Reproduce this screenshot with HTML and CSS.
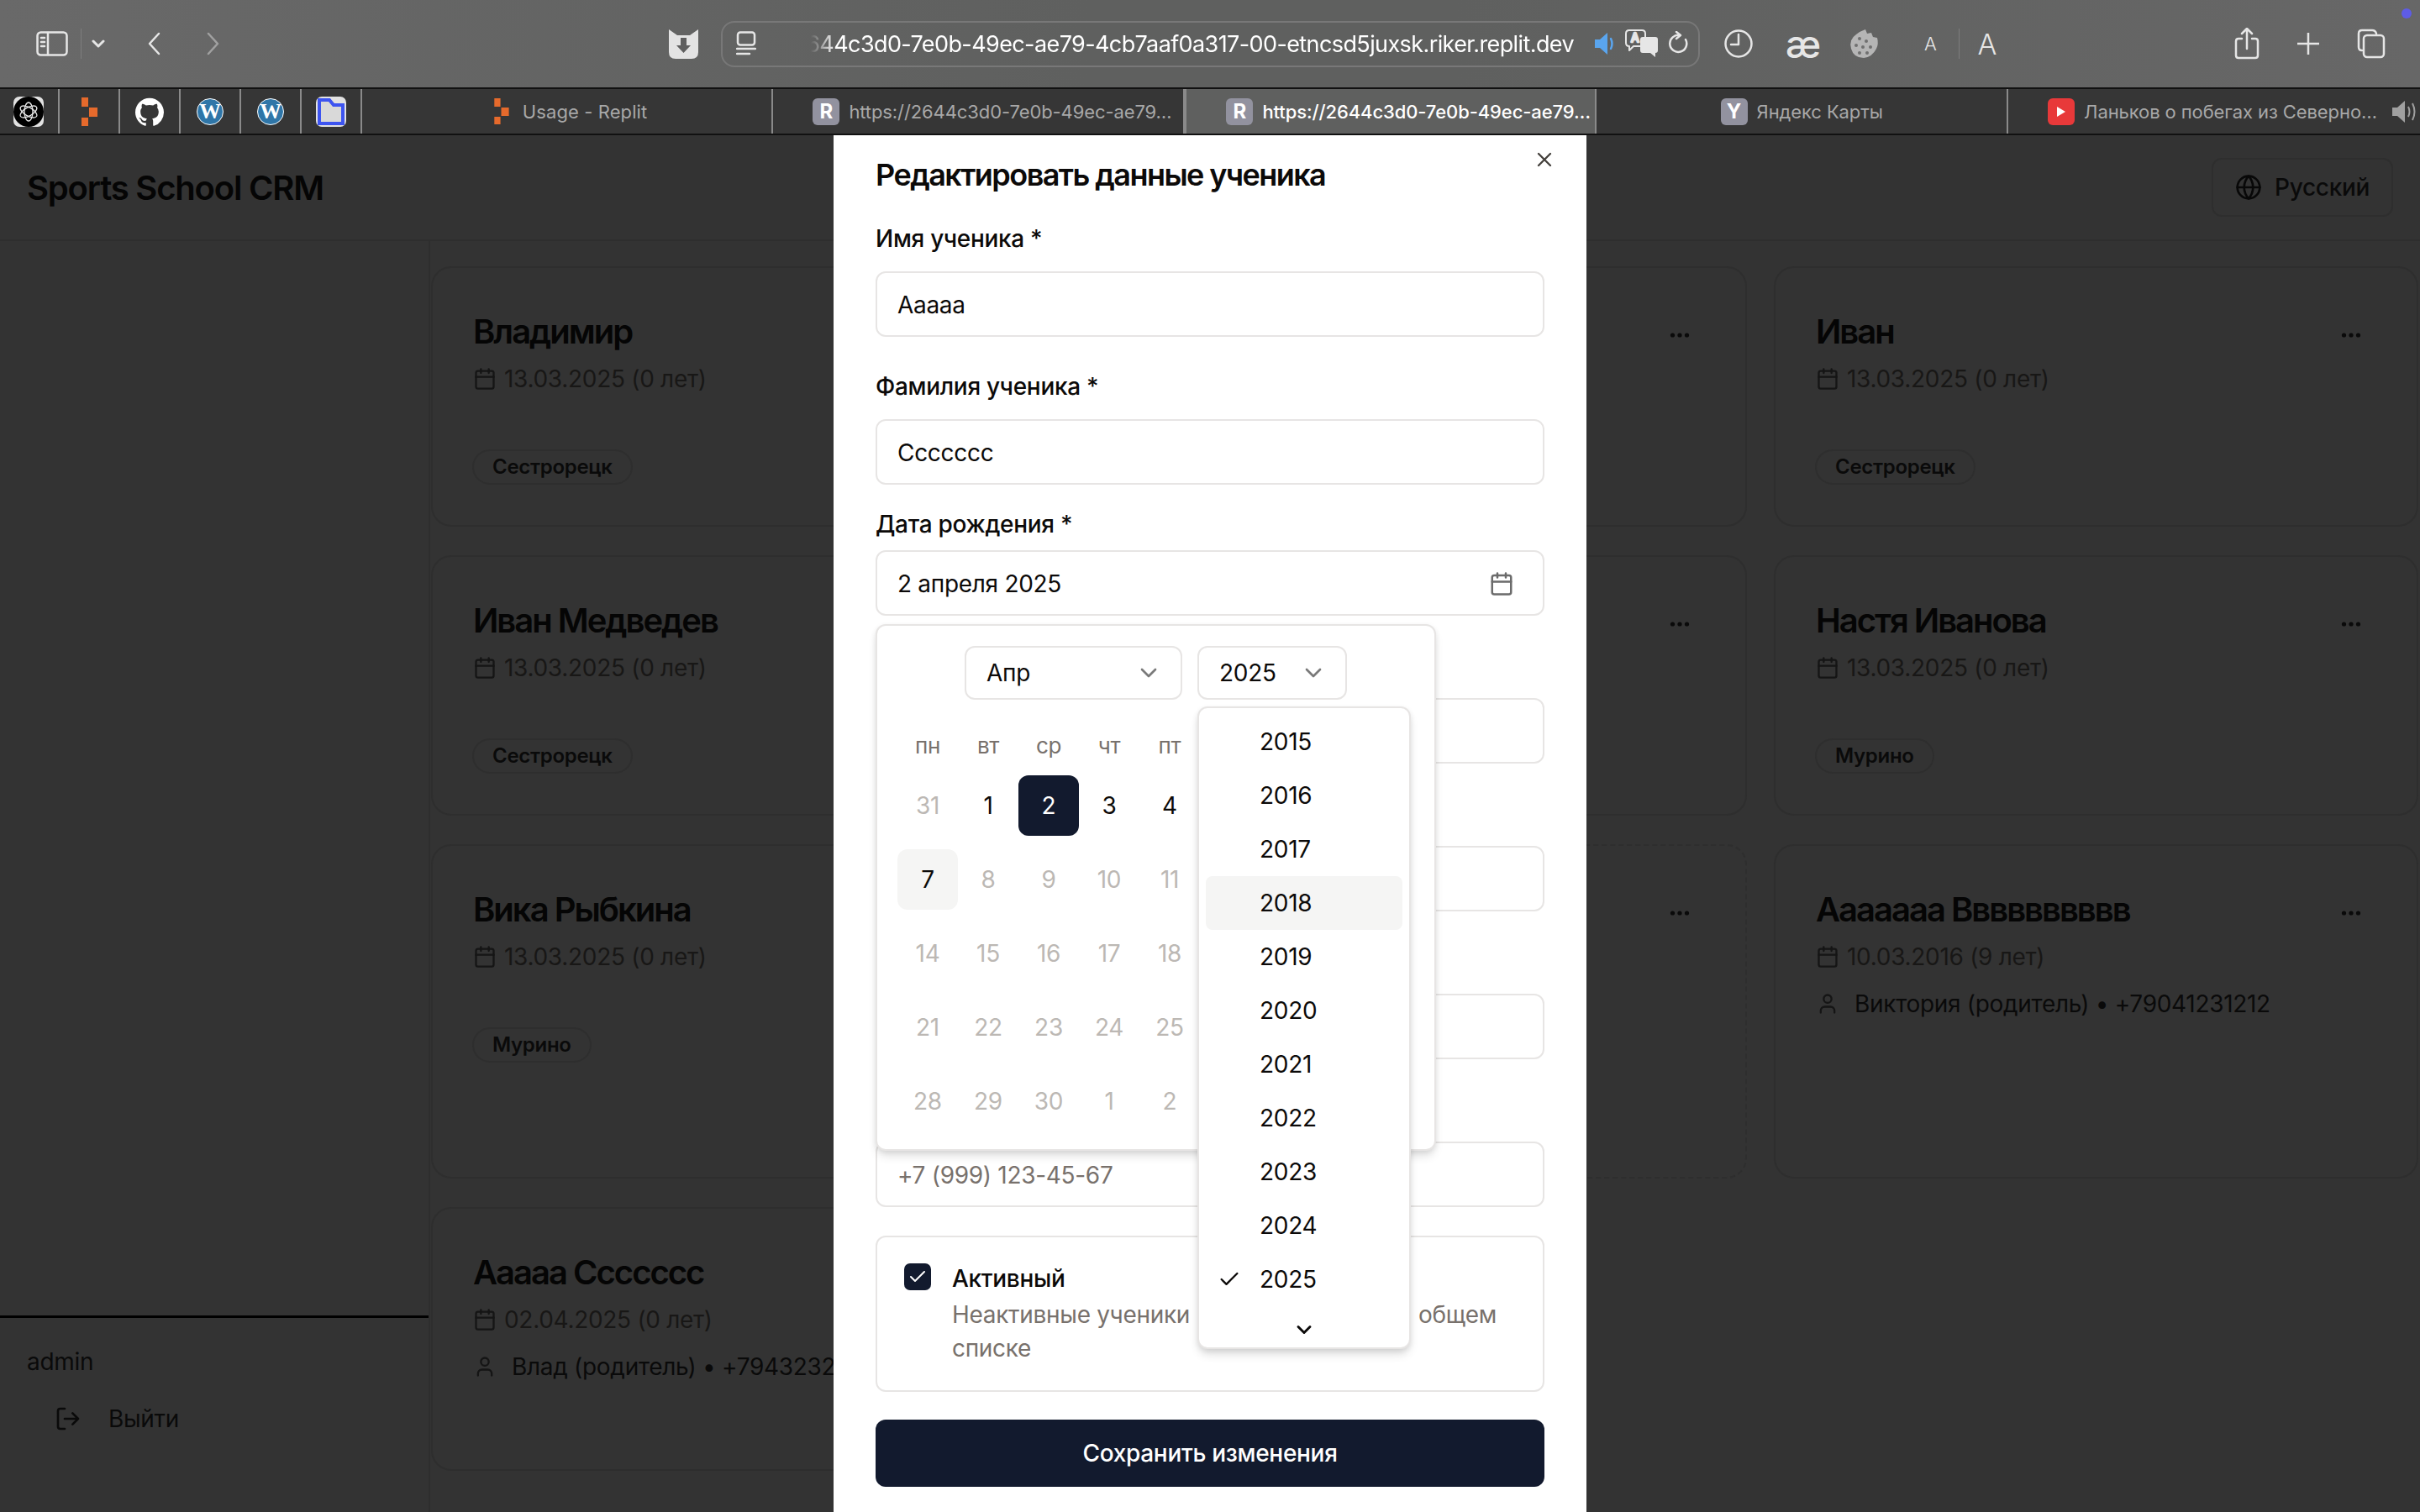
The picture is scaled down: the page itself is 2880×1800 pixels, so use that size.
FILE: index.html
```html
<!DOCTYPE html>
<html lang="ru">
<head>
    <meta charset="UTF-8">
    <title>Sports School CRM</title>
    <link rel="stylesheet" href="styles.css">
</head>
<body>

    <svg class="defs" width="0" height="0">
        <symbol id="i-cal" viewBox="0 0 24 24"><rect x="3" y="4" width="18" height="18" rx="2"/><path d="M16 2v4M8 2v4M3 10h18"/></symbol>
        <symbol id="i-user" viewBox="0 0 24 24"><path d="M19 21v-2a4 4 0 0 0-4-4H9a4 4 0 0 0-4 4v2"/><circle cx="12" cy="7" r="4"/></symbol>
        <symbol id="i-chev" viewBox="0 0 24 24"><path d="M6 9l6 6 6-6"/></symbol>
        <symbol id="i-dots" viewBox="0 0 24 8"><circle cx="3.5" cy="4" r="2.6"/><circle cx="12" cy="4" r="2.6"/><circle cx="20.5" cy="4" r="2.6"/></symbol>
    </svg>

    <!-- browser toolbar -->
    <div class="toolbar">
        <svg class="tb-sidebar" width="38" height="30" viewBox="0 0 38 30"><rect x="1.5" y="1.5" width="35" height="27" rx="4"/><path d="M14 2v26M6 8h4M6 13h4M6 18h4"/></svg>
        <span class="tb-sep"></span>
        <svg class="tb-menu" width="16" height="10" viewBox="0 0 16 10"><path d="M2 2l6 6 6-6"/></svg>
        <svg class="tb-back" width="16" height="28" viewBox="0 0 16 28"><path d="M14 2L3 14l11 12"/></svg>
        <svg class="tb-fwd" width="16" height="28" viewBox="0 0 16 28"><path d="M2 2l11 12L2 26"/></svg>
        <svg class="tb-shield" width="35" height="35" viewBox="0 0 35 35"><path class="shield-body" d="M0 0l10 7h15l10-7v27q0 8-8 8H8q-8 0-8-8z"/><path class="shield-arrow" d="M14 10h7v9h5l-8.500 9L9 19h5z"/></svg>

        <div class="urlbar">
            <svg class="url-reader" width="24" height="30" viewBox="0 0 24 30"><rect x="2" y="1.500" width="20" height="15" rx="3"/><path d="M1 21h22M1 27h15"/></svg>
            <div class="url-text"><span>2644c3d0-7e0b-49ec-ae79-4cb7aaf0a317-00-etncsd5juxsk.riker.replit.dev</span></div>
            <svg class="url-sound" width="26" height="28" viewBox="0 0 26 28"><path class="sound-fill" d="M1 9h6l9-8v26l-9-8H1z"/><path class="sound-wave" d="M20 8q3 6 0 12"/></svg>
            <svg class="url-translate" width="40" height="34" viewBox="0 0 40 34">
                <path class="tr-back" d="M5 1h15q4 0 4 4v11q0 4-4 4H10l-5 5v-5q-4 0-4-4V5q0-4 4-4z"/>
                <text class="tr-a" x="7" y="15">A</text>
                <path class="tr-front" d="M21 9h15q3 0 3 3v13q0 3-3 3v5l-6-5h-9q-3 0-3-3V12q0-3 3-3z"/>
                <text class="tr-x" x="26" y="24">x</text>
            </svg>
            <svg class="url-reload" width="24" height="30" viewBox="0 0 24 30"><path d="M14 5A10 10 0 1 0 21 10"/><path d="M10 1l5 4-5 4"/></svg>
        </div>

        <svg class="tb-clock" width="34" height="34" viewBox="0 0 34 34"><circle cx="17" cy="17" r="15.500"/><path d="M17 6v12H8"/></svg>
        <span class="tb-ae">æ</span>
        <svg class="tb-cookie" width="36" height="36" viewBox="0 0 36 36">
            <path class="cookie-body" d="M20 1l2 5 5-1 2 5 5 1q2 7-1 13-5 10-15 11Q6 35 3 24 0 13 9 7q5-4 11-6z"/>
            <circle cx="13" cy="12" r="2"/><circle cx="21" cy="15" r="2"/><circle cx="9" cy="20" r="2"/><circle cx="17" cy="22" r="2"/><circle cx="26" cy="22" r="2"/><circle cx="13" cy="29" r="2"/><circle cx="22" cy="29" r="2"/>
        </svg>
        <span class="tb-a-small">A</span>
        <span class="tb-sep tb-sep-a"></span>
        <span class="tb-a-big">A</span>
        <svg class="tb-share" width="30" height="38" viewBox="0 0 30 38"><path d="M9 13H5q-3 0-3 3v17q0 3 3 3h20q3 0 3-3V16q0-3-3-3h-4M15 25V2M9 7l6-6 6 6"/></svg>
        <svg class="tb-plus" width="26" height="26" viewBox="0 0 26 26"><path d="M13 0v26M0 13h26"/></svg>
        <svg class="tb-tabs" width="34" height="36" viewBox="0 0 34 36"><path d="M6 26q-4 0-4-4V6q0-4 4-4h12q4 0 5 4"/><rect x="8" y="8" width="24" height="26" rx="4"/></svg>
        <span class="tb-dot"></span>
    </div>

    <!-- tab strip -->
    <div class="tabstrip">
        <div class="pin">
            <span class="pin-tile pin-tile-gpt">
                <svg width="36" height="36" viewBox="0 0 36 36">
                    <circle class="gpt-disc" cx="18" cy="18" r="18"/>
                    <g class="gpt-knot"><ellipse cx="18" cy="18" rx="5" ry="11"/><ellipse cx="18" cy="18" rx="5" ry="11" transform="rotate(60 18 18)"/><ellipse cx="18" cy="18" rx="5" ry="11" transform="rotate(120 18 18)"/></g>
                </svg>
            </span>
        </div>
        <div class="pin">
            <svg class="replit" width="20" height="34" viewBox="0 0 20 34"><path d="M1 0h8v11H1zM10 12h10v11H10zM1 24h8v10H1z"/></svg>
        </div>
        <div class="pin">
            <svg class="github" width="34" height="34" viewBox="0 0 24 24"><path d="M12 .5C5.370.5 0 5.870 0 12.500c0 5.300 3.440 9.800 8.200 11.390.6.110.82-.26.82-.58v-2.030c-3.340.73-4.040-1.610-4.040-1.610-.55-1.390-1.340-1.760-1.340-1.760-1.090-.75.08-.73.08-.73 1.210.08 1.840 1.240 1.840 1.240 1.070 1.840 2.810 1.310 3.500 1 .1-.78.42-1.310.76-1.610-2.670-.3-5.470-1.340-5.470-5.930 0-1.310.47-2.380 1.240-3.220-.14-.3-.54-1.520.1-3.180 0 0 1-.32 3.300 1.230a11.500 11.500 0 0 1 6 0c2.280-1.550 3.290-1.230 3.290-1.230.64 1.660.24 2.880.12 3.180a4.650 4.650 0 0 1 1.230 3.220c0 4.610-2.800 5.630-5.480 5.920.42.36.81 1.100.81 2.220v3.290c0 .32.22.7.82.58A12 12 0 0 0 24 12.500C24 5.870 18.630.5 12 .5z"/></svg>
        </div>
        <div class="pin"><span class="wp">W</span></div>
        <div class="pin"><span class="wp">W</span></div>
        <div class="pin">
            <span class="pin-tile pin-tile-folder">
                <svg width="36" height="36" viewBox="0 0 36 36"><path d="M4 32V4h12l5 6h11v22z"/></svg>
            </span>
        </div>
        <div class="tab tab-usage">
            <svg class="replit" width="19" height="31" viewBox="0 0 20 34"><path d="M1 0h8v11H1zM10 12h10v11H10zM1 24h8v10H1z"/></svg>
            <span class="tab-label">Usage - Replit</span>
        </div>
        <div class="tab tab-url">
            <span class="fav">R</span>
            <span class="tab-label">https://2644c3d0-7e0b-49ec-ae79…</span>
        </div>
        <div class="tab tab-url tab-active">
            <span class="fav">R</span>
            <span class="tab-label">https://2644c3d0-7e0b-49ec-ae79…</span>
        </div>
        <div class="tab">
            <span class="fav">Y</span>
            <span class="tab-label">Яндекс Карты</span>
        </div>
        <div class="tab tab-last">
            <span class="fav fav-yt"><svg width="12" height="14" viewBox="0 0 12 14"><path d="M1 1l10 6-10 6z"/></svg></span>
            <span class="tab-label">Ланьков о побегах из Северно…</span>
            <svg class="tab-sound" width="30" height="28" viewBox="0 0 30 28"><path class="sound-body" d="M1 9h6l9-8v26l-9-8H1z"/><path class="sound-line" d="M20 8q3 6 0 12M25 4q5 10 0 20"/></svg>
        </div>
    </div>

    <!-- app, dimmed by the dialog overlay -->
    <div class="app">
        <header class="app-header">
            <h1 class="app-title">Sports School CRM</h1>
            <div class="lang-btn">
                <svg class="icon lang-icon" viewBox="0 0 24 24"><circle cx="12" cy="12" r="10"/><path d="M2 12h20M12 2a15.300 15.300 0 0 1 4 10 15.300 15.300 0 0 1-4 10 15.300 15.300 0 0 1-4-10 15.300 15.300 0 0 1 4-10z"/></svg>
                <span>Русский</span>
            </div>
        </header>

        <div class="app-body">
            <aside class="sidebar">
                <div class="sidebar-foot">
                    <div class="sidebar-user">admin</div>
                    <div class="logout">
                        <svg class="icon logout-icon" viewBox="0 0 24 24"><path d="M9 21H5a2 2 0 0 1-2-2V5a2 2 0 0 1 2-2h4M16 17l5-5-5-5M21 12H9"/></svg>
                        <span>Выйти</span>
                    </div>
                </div>
            </aside>

            <main class="cards">
                <div class="card">
                    <div class="card-head"><div class="card-name">Владимир</div></div>
                    <div class="card-date"><svg class="icon date-icon"><use href="#i-cal"/></svg>13.03.2025 (0 лет)</div>
                    <span class="badge">Сестрорецк</span>
                </div>
                <div class="card">
                    <div class="card-head"><div class="card-name"></div><svg class="dots"><use href="#i-dots"/></svg></div>
                </div>
                <div class="card">
                    <div class="card-head"><div class="card-name">Иван</div><svg class="dots"><use href="#i-dots"/></svg></div>
                    <div class="card-date"><svg class="icon date-icon"><use href="#i-cal"/></svg>13.03.2025 (0 лет)</div>
                    <span class="badge">Сестрорецк</span>
                </div>

                <div class="card">
                    <div class="card-head"><div class="card-name">Иван Медведев</div></div>
                    <div class="card-date"><svg class="icon date-icon"><use href="#i-cal"/></svg>13.03.2025 (0 лет)</div>
                    <span class="badge">Сестрорецк</span>
                </div>
                <div class="card">
                    <div class="card-head"><div class="card-name"></div><svg class="dots"><use href="#i-dots"/></svg></div>
                </div>
                <div class="card">
                    <div class="card-head"><div class="card-name">Настя Иванова</div><svg class="dots"><use href="#i-dots"/></svg></div>
                    <div class="card-date"><svg class="icon date-icon"><use href="#i-cal"/></svg>13.03.2025 (0 лет)</div>
                    <span class="badge">Мурино</span>
                </div>

                <div class="card">
                    <div class="card-head"><div class="card-name">Вика Рыбкина</div></div>
                    <div class="card-date"><svg class="icon date-icon"><use href="#i-cal"/></svg>13.03.2025 (0 лет)</div>
                    <span class="badge">Мурино</span>
                </div>
                <div class="card card-dashed">
                    <div class="card-head"><div class="card-name"></div><svg class="dots"><use href="#i-dots"/></svg></div>
                </div>
                <div class="card">
                    <div class="card-head"><div class="card-name">Ааааааа Вввввввввв</div><svg class="dots"><use href="#i-dots"/></svg></div>
                    <div class="card-date"><svg class="icon date-icon"><use href="#i-cal"/></svg>10.03.2016 (9 лет)</div>
                    <div class="card-parent"><svg class="icon parent-icon"><use href="#i-user"/></svg>Виктория (родитель) • +79041231212</div>
                </div>

                <div class="card">
                    <div class="card-head"><div class="card-name">Ааааа Ссссссс</div></div>
                    <div class="card-date"><svg class="icon date-icon"><use href="#i-cal"/></svg>02.04.2025 (0 лет)</div>
                    <div class="card-parent"><svg class="icon parent-icon"><use href="#i-user"/></svg>Влад (родитель) • +79432323232</div>
                </div>
            </main>
        </div>

        <!-- dialog -->
        <div class="modal">
            <svg class="icon modal-close" viewBox="0 0 24 24"><path d="M18 6L6 18M6 6l12 12"/></svg>
            <h2 class="modal-title">Редактировать данные ученика</h2>

            <label class="label label-first">Имя ученика *</label>
            <div class="input">Ааааа</div>

            <label class="label label-second">Фамилия ученика *</label>
            <div class="input">Ссссссс</div>

            <label class="label label-date">Дата рождения *</label>
            <div class="date-field">
                <div class="input input-date">
                    <span>2 апреля 2025</span>
                    <svg class="icon input-cal"><use href="#i-cal"/></svg>
                </div>

                <div class="popover">
                    <div class="cal-selects">
                        <div class="select select-month"><span>Апр</span><svg class="icon select-chev"><use href="#i-chev"/></svg></div>
                        <div class="select select-year"><span>2025</span><svg class="icon select-chev"><use href="#i-chev"/></svg></div>
                    </div>
                    <div class="cal-week">
                        <span>пн</span><span>вт</span><span>ср</span><span>чт</span><span>пт</span>
                    </div>
                    <div class="cal-days">
                        <span class="day off">31</span><span class="day">1</span><span class="day selected">2</span><span class="day">3</span><span class="day">4</span>
                        <span class="day today">7</span><span class="day off">8</span><span class="day off">9</span><span class="day off">10</span><span class="day off">11</span>
                        <span class="day off">14</span><span class="day off">15</span><span class="day off">16</span><span class="day off">17</span><span class="day off">18</span>
                        <span class="day off">21</span><span class="day off">22</span><span class="day off">23</span><span class="day off">24</span><span class="day off">25</span>
                        <span class="day off">28</span><span class="day off">29</span><span class="day off">30</span><span class="day off">1</span><span class="day off">2</span>
                    </div>

                    <div class="years">
                        <div class="year">2015</div>
                        <div class="year">2016</div>
                        <div class="year">2017</div>
                        <div class="year year-hover">2018</div>
                        <div class="year">2019</div>
                        <div class="year">2020</div>
                        <div class="year">2021</div>
                        <div class="year">2022</div>
                        <div class="year">2023</div>
                        <div class="year">2024</div>
                        <div class="year"><svg class="icon year-check" viewBox="0 0 24 24"><path d="M20 6L9 17l-5-5"/></svg>2025</div>
                        <div class="years-more"><svg class="icon years-chev"><use href="#i-chev"/></svg></div>
                    </div>
                </div>
            </div>

            <div class="input input-behind"></div>
            <div class="input input-behind"></div>
            <div class="input input-behind"></div>
            <div class="input input-behind input-phone">+7 (999) 123-45-67</div>

            <div class="active-box">
                <span class="checkbox"><svg class="icon checkbox-tick" viewBox="0 0 24 24"><path d="M20 6L9 17l-5-5"/></svg></span>
                <div class="active-text">
                    <div class="active-title">Активный</div>
                    <div class="active-desc"><span class="desc-start">Неактивные ученики</span><span class="desc-end">общем</span><br>списке</div>
                </div>
            </div>

            <button class="save-btn">Сохранить изменения</button>
        </div>
    </div>

</body>
</html>
```

FILE: styles.css
```css
* {
    box-sizing: border-box;
}

html, body {
    margin: 0;
    height: 1800px;
    overflow: hidden;
}

body {
    background-color: #333333;
    font-family: 'Inter', 'Liberation Sans', sans-serif;
    letter-spacing: -0.3px;
    color: #0a0a0a;
}

svg {
    display: block;
    flex-shrink: 0;
}

.defs {
    position: absolute;
}

.icon {
    fill: none;
    stroke: currentColor;
    stroke-width: 2;
    stroke-linecap: round;
    stroke-linejoin: round;
}

/* Browser toolbar */
.toolbar {
    position: relative;
    display: flex;
    align-items: center;
    height: 104px;
    padding-left: 43px;
    background: linear-gradient(90deg, #696969 0%, #5f605f 45%, #5f605f 60%, #676767 100%);
}

.toolbar svg {
    fill: none;
    stroke: #e6e6e6;
    stroke-width: 2.500;
    stroke-linecap: round;
    stroke-linejoin: round;
}

.tb-sep {
    width: 1px;
    height: 36px;
    margin-left: 15px;
    background-color: #7d7d7d;
}

.tb-menu { margin-left: 12px; stroke-width: 3 !important; }
.tb-back { margin-left: 50px; }
.tb-fwd { margin-left: 55px; opacity: 0.45; }
.tb-shield { margin-left: 534px; }
.toolbar .shield-body { fill: #e3e3e3; stroke: none; }
.toolbar .shield-arrow { fill: #5f5f5f; stroke: none; }

.urlbar {
    display: flex;
    align-items: center;
    width: 1165px;
    height: 55px;
    margin-left: 27px;
    padding-left: 16px;
    border: 2px solid #787878;
    border-radius: 16px;
}

.url-text {
    display: flex;
    justify-content: flex-end;
    width: 908px;
    margin-left: 65px;
    overflow: hidden;
    white-space: nowrap;
    font-size: 27px;
    letter-spacing: -0.6px;
    color: #ffffff;
    -webkit-mask-image: linear-gradient(90deg, transparent 0, #000 30px);
    mask-image: linear-gradient(90deg, transparent 0, #000 30px);
}

.url-sound { margin-left: 24px; }
.toolbar .sound-fill { fill: #5aa5ee; stroke: none; }
.toolbar .sound-wave { stroke: #5aa5ee; }
.url-translate { margin-left: 11px; }
.toolbar .tr-back { fill: #5f605f; stroke-width: 2; }
.toolbar .tr-front { fill: #e6e6e6; stroke: none; }
.tr-a { font-size: 14px; fill: #e6e6e6; }
.tr-x { font-size: 16px; font-weight: 700; fill: #444444; }
.url-reload { margin-left: 11px; }

.tb-clock { margin-left: 29px; }
.tb-ae {
    width: 38px;
    margin-left: 39px;
    font-size: 46px;
    font-weight: 500;
    line-height: 50px;
    color: #e6e6e6;
}
.tb-cookie { margin-left: 37px; }
.toolbar .tb-cookie { fill: #707070; stroke: none; }
.toolbar .cookie-body { fill: #b5b5b5; }
.tb-a-small {
    margin-left: 54px;
    font-size: 22px;
    font-weight: 300;
    color: #e6e6e6;
}
.tb-sep-a { margin-left: 26px; }
.tb-a-big {
    margin-left: 22px;
    font-size: 34px;
    font-weight: 300;
    color: #e6e6e6;
}
.tb-share { margin-left: 283px; }
.tb-plus { margin-left: 45px; }
.tb-tabs { margin-left: 45px; }

.tb-dot {
    position: absolute;
    top: 10px;
    left: 2858px;
    width: 12px;
    height: 12px;
    border-radius: 50%;
    background-color: #5e5ce6;
}

/* Tab strip */
.tabstrip {
    display: flex;
    height: 57px;
    background-color: #363636;
    border-top: 2px solid #111111;
    border-bottom: 2px solid #111111;
}

.pin {
    display: flex;
    align-items: center;
    justify-content: center;
    width: 72px;
    border-right: 2px solid #8a8a8a;
}

.pin:first-child {
    width: 71px;
}

.pin-tile {
    display: block;
    width: 36px;
    height: 36px;
    border-radius: 7px;
    background-color: #e2e2e2;
    overflow: hidden;
}

.gpt-disc { fill: #000000; }
.gpt-knot { fill: none; stroke: #e8e8e8; stroke-width: 1.300; }
.pin-tile-folder path { fill: #d9d9d9; stroke: #3d54f0; stroke-width: 4; }
.replit path { fill: #e66a2c; }
.github path { fill: #ffffff; }

.wp {
    display: flex;
    align-items: center;
    justify-content: center;
    width: 32px;
    height: 32px;
    border-radius: 50%;
    border: 1px solid #ffffff;
    background-color: #2f76a8;
    font-family: 'Liberation Serif', serif;
    font-size: 26px;
    font-weight: 700;
    line-height: 32px;
    color: #ffffff;
}

.tab {
    display: flex;
    align-items: center;
    justify-content: center;
    gap: 11px;
    width: 490px;
    padding: 0 16px;
    border-right: 2px solid #8a8a8a;
    font-size: 22px;
    letter-spacing: -0.1px;
    color: #a8a8a8;
    white-space: nowrap;
}

.tab-usage {
    gap: 16px;
    padding-left: 24px;
    letter-spacing: 0.1px;
}

.tab-url {
    justify-content: flex-start;
    padding-left: 47px;
}

.tab-active {
    background-color: #5f605f;
    border-left: 2px solid #8a8a8a;
    color: #ffffff;
    font-weight: 500;
}

.tab-last {
    flex: 1;
    border-right: none;
    justify-content: flex-start;
    padding-left: 47px;
}

.tab-sound {
    margin-left: 6px;
}

.fav {
    display: flex;
    align-items: center;
    justify-content: center;
    flex-shrink: 0;
    width: 32px;
    height: 32px;
    border-radius: 6px;
    background-color: #92929f;
    font-size: 24px;
    font-weight: 700;
    color: #ffffff;
}

.fav-yt {
    background-color: #e8393a;
}

.fav-yt path {
    fill: #ffffff;
}

.tab-sound .sound-body { fill: #a0a0a0; }
.tab-sound .sound-line { fill: none; stroke: #a0a0a0; stroke-width: 2; }

/* App behind the overlay */
.app {
    position: relative;
    height: 1639px;
}

.app-header {
    display: flex;
    align-items: center;
    justify-content: space-between;
    height: 126px;
    padding: 0 32px;
    border-bottom: 2px solid #2e2e2e;
}

.app-title {
    margin: 0;
    font-size: 40px;
    font-weight: 600;
    letter-spacing: -1.200px;
    color: #050505;
}

.lang-btn {
    display: flex;
    align-items: center;
    gap: 15px;
    width: 216px;
    height: 70px;
    padding-left: 26px;
    border: 2px solid #2e2e2e;
    border-radius: 12px;
    font-size: 28px;
    font-weight: 500;
}

.lang-icon {
    width: 32px;
    height: 32px;
    stroke: #080808;
}

.app-body {
    display: flex;
    height: 1513px;
}

.sidebar {
    display: flex;
    flex-direction: column;
    justify-content: flex-end;
    width: 512px;
    border-right: 2px solid #2e2e2e;
}

.sidebar-foot {
    height: 234px;
    padding: 34px 32px 0;
    border-top: 3px solid #000000;
}

.sidebar-user {
    font-size: 28px;
    line-height: 36px;
}

.logout {
    display: flex;
    align-items: center;
    gap: 32px;
    margin-top: 32px;
    padding-left: 33px;
    font-size: 28px;
    line-height: 36px;
}

.logout-icon {
    width: 32px;
    height: 32px;
}

.cards {
    flex: 1;
    display: grid;
    grid-template-columns: repeat(3, 1fr);
    grid-template-rows: 310px 310px 398px 314px;
    gap: 34px 32px;
    align-content: start;
    padding: 30px 2px 0 1px;
}

.card {
    padding: 54px 66px 0 48px;
    border: 2px solid #2e2e2e;
    border-radius: 24px;
}

.card-dashed {
    border-style: dashed;
}

.card-head {
    display: flex;
    justify-content: space-between;
}

.card-name {
    font-size: 40px;
    font-weight: 600;
    line-height: 44px;
    letter-spacing: -2px;
    color: #050505;
}

.dots {
    width: 24px;
    height: 8px;
    margin-top: 22px;
    fill: #0a0a0a;
}

.card-date {
    display: flex;
    align-items: center;
    gap: 9px;
    margin-top: 14px;
    font-size: 28px;
    line-height: 40px;
    color: #181716;
    white-space: nowrap;
}

.date-icon {
    width: 28px;
    height: 28px;
    stroke: #151515;
}

.badge {
    display: inline-block;
    margin: 64px 0 0 -1px;
    padding: 0 22px;
    border: 2px solid #2e2e2e;
    border-radius: 21px;
    font-size: 24px;
    font-weight: 600;
    line-height: 38px;
    color: #0a0a0a;
}

.card-parent {
    display: flex;
    align-items: center;
    gap: 18px;
    margin-top: 16px;
    font-size: 28px;
    line-height: 40px;
    white-space: nowrap;
}

.parent-icon {
    width: 28px;
    height: 28px;
    stroke: #151515;
}

/* Dialog */
.modal {
    position: absolute;
    top: 0;
    left: 992px;
    width: 896px;
    height: 1639px;
    padding: 25px 50px 0;
    background-color: #ffffff;
    color: #0c0a09;
}

.modal-close {
    position: absolute;
    top: 15px;
    left: 832px;
    width: 28px;
    height: 28px;
    stroke: #44403c;
}

.modal-title {
    margin: 0;
    font-size: 36px;
    font-weight: 600;
    line-height: 44px;
    letter-spacing: -1.550px;
}

.label {
    display: block;
    font-size: 28px;
    font-weight: 500;
    line-height: 28px;
}

.label-first { margin: 40px 0 25px; }
.label-second { margin: 45px 0 25px; }
.label-date { margin: 33px 0 17px; }

.input {
    display: flex;
    align-items: center;
    height: 78px;
    padding: 1px 24px 0;
    border: 2px solid #e7e5e4;
    border-radius: 12px;
    font-size: 28px;
}

.input-date {
    justify-content: space-between;
    padding-right: 34px;
}

.input-cal {
    width: 30px;
    height: 30px;
    stroke: #6b6b6b;
}

.input-behind {
    margin-top: 98px;
}

.input-phone {
    color: #78716c;
}

.date-field {
    position: relative;
}

/* Date picker popover */
.popover {
    position: absolute;
    top: 88px;
    left: 0;
    z-index: 2;
    width: 667px;
    height: 627px;
    padding: 24px;
    background-color: #ffffff;
    border: 2px solid #e7e5e4;
    border-radius: 12px;
    box-shadow: 0 8px 12px -2px rgba(0, 0, 0, 0.12), 0 2px 6px rgba(0, 0, 0, 0.08);
}

.cal-selects {
    display: flex;
    justify-content: center;
    gap: 18px;
}

.select {
    display: flex;
    align-items: center;
    justify-content: space-between;
    height: 64px;
    padding: 0 22px 0 24px;
    border: 2px solid #e7e5e4;
    border-radius: 12px;
    font-size: 28px;
}

.select-month { width: 259px; }
.select-year { width: 178px; }

.select-chev {
    width: 32px;
    height: 32px;
    stroke: #7a7a7a;
}

.cal-week {
    display: grid;
    grid-template-columns: repeat(5, 72px);
    margin-top: 37px;
    font-size: 26px;
    line-height: 36px;
    text-align: center;
    color: #78716c;
}

.cal-days {
    display: grid;
    grid-template-columns: repeat(5, 72px);
    grid-auto-rows: 72px;
    row-gap: 16px;
    margin-top: 17px;
    font-size: 28px;
}

.day {
    display: flex;
    align-items: center;
    justify-content: center;
    border-radius: 12px;
}

.day.off { color: #bcb8b4; }
.day.selected { background-color: #121a2e; color: #ffffff; }
.day.today { background-color: #f5f5f4; }

/* Year dropdown */
.years {
    position: absolute;
    top: 96px;
    left: 381px;
    width: 254px;
    height: 765px;
    padding: 8px;
    background-color: #ffffff;
    border: 2px solid #e7e5e4;
    border-radius: 12px;
    box-shadow: 0 8px 12px -2px rgba(0, 0, 0, 0.14), 0 2px 6px rgba(0, 0, 0, 0.08);
}

.year {
    position: relative;
    height: 64px;
    padding-left: 64px;
    border-radius: 8px;
    font-size: 28px;
    line-height: 64px;
}

.year-hover {
    background-color: #f5f5f4;
}

.year-check {
    position: absolute;
    top: 18px;
    left: 14px;
    width: 28px;
    height: 28px;
}

.years-more {
    display: flex;
    justify-content: center;
    padding-top: 14px;
}

.years-chev {
    width: 28px;
    height: 28px;
    stroke-width: 2.500;
}

/* Active checkbox block */
.active-box {
    display: flex;
    gap: 25px;
    height: 186px;
    margin-top: 34px;
    padding: 31px 30px 0 32px;
    border: 2px solid #e7e5e4;
    border-radius: 12px;
}

.checkbox {
    display: flex;
    align-items: center;
    justify-content: center;
    flex-shrink: 0;
    width: 32px;
    height: 32px;
    border-radius: 7px;
    background-color: #121a2e;
}

.checkbox-tick {
    width: 24px;
    height: 24px;
    stroke: #ffffff;
}

.active-text {
    flex: 1;
}

.active-title {
    font-size: 28px;
    font-weight: 500;
    line-height: 36px;
}

.active-desc {
    margin-top: 5px;
    font-size: 28px;
    line-height: 40px;
    color: #78716c;
}

/* the middle of this sentence sits under the year dropdown */
.desc-end {
    margin-left: 272px;
}

.save-btn {
    display: block;
    width: 100%;
    height: 80px;
    margin-top: 33px;
    border: none;
    border-radius: 12px;
    background-color: #121a2e;
    font-family: inherit;
    font-size: 28px;
    font-weight: 500;
    letter-spacing: -0.3px;
    color: #ffffff;
}
```
